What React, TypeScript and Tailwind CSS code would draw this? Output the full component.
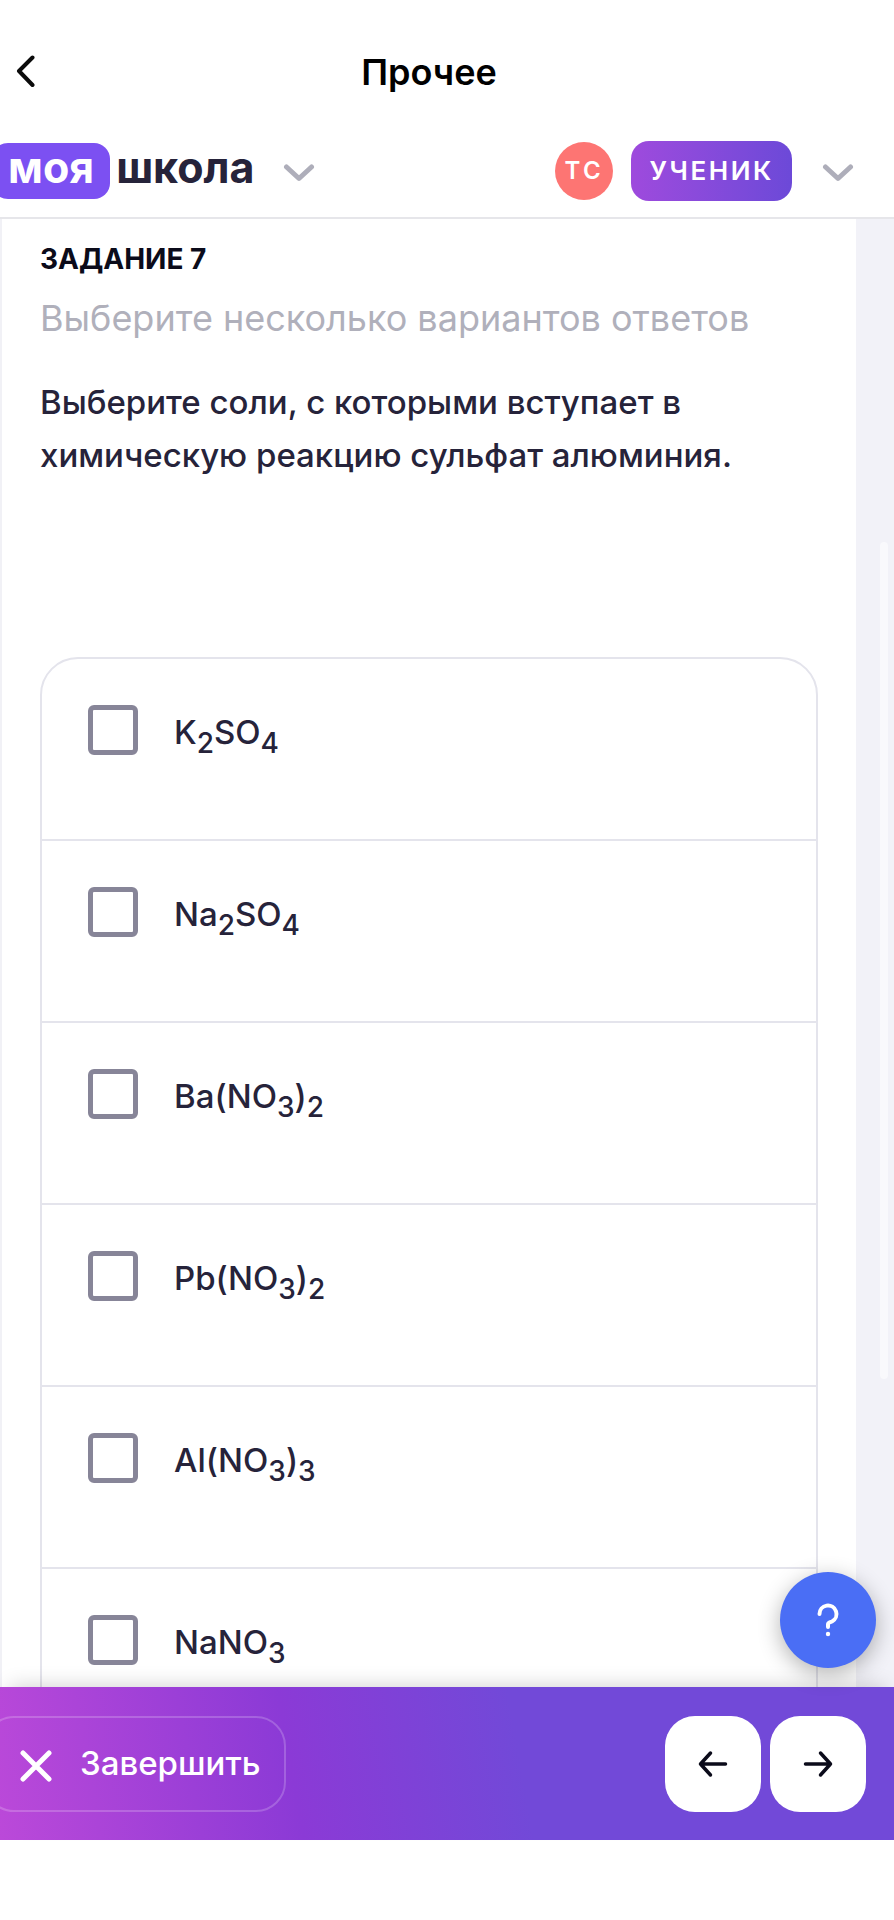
import { Fragment } from 'react';

const answers = ['K2SO4', 'Na2SO4', 'Ba(NO3)2', 'Pb(NO3)2', 'Al(NO3)3', 'NaNO3'];

// digits in a formula go to the lower index
function Formula({ text }: { text: string }) {
	return (
		<span>
			{text.split(/(\d)/).map((part, i) =>
				/\d/.test(part) ? (
					<sub key={i} className="-bottom-[9px] text-[28px]">{part}</sub>
				) : (
					<Fragment key={i}>{part}</Fragment>
				)
			)}
		</span>
	);
}

function Chevron() {
	return (
		<svg className="mt-1" width="32" height="20" viewBox="0 0 32 20" fill="none" stroke="#aeaeba" strokeWidth="5" strokeLinecap="round" strokeLinejoin="round">
			<path d="M3.5 4 16 15.5 28.5 4" />
		</svg>
	);
}

function Arrow({ back }: { back?: boolean }) {
	return (
		<svg width="32" height="32" viewBox="0 0 32 32" fill="none" stroke="#0b0b1a" strokeWidth="3.5" strokeLinecap="round" strokeLinejoin="round">
			<path d={back ? 'M28.5 16H3.5M13.5 5 3.5 16 13.5 27' : 'M3.5 16H28.5M18.5 5 28.5 16 18.5 27'} />
		</svg>
	);
}

function App() {
	return (
		<div className="flex flex-col h-screen overflow-hidden bg-white text-[#26233a] font-['Inter','Liberation_Sans',sans-serif]">
			<header className="shrink-0">
				<div className="flex items-center h-32 pt-4 pl-4 pr-18">
					<button type="button" aria-label="Назад" className="shrink-0">
						<svg width="20" height="34" viewBox="0 0 20 34" fill="none" stroke="#0b0b0b" strokeWidth="4" strokeLinecap="round" strokeLinejoin="round">
							<path d="M16.5 2.5 3 16 16.5 30" />
						</svg>
					</button>
					<h1 className="flex-1 text-center text-4xl font-semibold text-black">Прочее</h1>
				</div>

				<div className="flex items-center justify-between h-[91px] pb-1 pr-10 border-b-2 border-[#e6e6ea]">
					<button type="button" className="flex items-center text-[43px] leading-none font-bold">
						<span className="flex items-center h-14 -ml-2 pb-1.5 pl-4 pr-4 rounded-2xl bg-[#7c50f2] text-white">моя</span>
						<span className="ml-1.5 mr-7 pb-1.5">школа</span>
						<Chevron />
					</button>
					<button type="button" className="flex items-center font-semibold text-white">
						<span className="flex items-center justify-center size-[58px] mr-[18px] rounded-full bg-[#fd7573] text-2xl tracking-[0.15em]">ТС</span>
						<span className="flex items-center h-15 px-[18px] mr-[30px] rounded-[18px] bg-linear-to-r from-[#9e4add] to-[#6c49d8] text-[26px] tracking-widest">УЧЕНИК</span>
						<Chevron />
					</button>
				</div>
			</header>

			<main className="flex flex-1 min-h-0 overflow-hidden">
				<section className="flex-1 px-[38px] pt-5 border-l-2 border-[#f1f1f6]">
					<h2 className="text-[28px] leading-10 font-bold text-[#0b0b1a]">ЗАДАНИЕ 7</h2>
					<p className="mt-[15px] text-4xl leading-12 text-[#b0b0bb]">Выберите несколько вариантов ответов</p>
					<p className="mt-[34px] text-[33px] leading-[53px] font-medium">
						Выберите соли, с которыми вступает в химическую реакцию сульфат алюминия.
					</p>

					<ul className="mt-[175px] border-2 border-[#e4e4ec] rounded-t-[38px]">
						{answers.map((answer) => (
							<li key={answer} className="h-[182px] border-b-2 border-[#e4e4ec]">
								<label className="flex items-start pt-[46px] pl-[46px] text-[33px] leading-[55px] font-medium">
									<input type="checkbox" className="appearance-none shrink-0 size-[50px] mr-9 border-[5px] border-[#878598] rounded-md checked:bg-[#7c50f2]" />
									<Formula text={answer} />
								</label>
							</li>
						))}
					</ul>
				</section>
				<div className="relative shrink-0 w-[38px] bg-[#f2f2f8]">
					<div className="absolute top-[22%] right-1.5 w-2 h-[57%] rounded-full bg-[#f9f9fc]" />
				</div>
			</main>

			<footer className="relative shrink-0 flex items-center justify-between h-[153px] mb-20 pr-7 bg-linear-[80deg,#bb49d9_0%,#8b3ad6_33%,#7249d8_58%,#7249d8_100%] shadow-[0_-10px_20px_-10px_rgba(0,0,0,0.2)]">
				<button type="button" className="flex items-center h-24 -ml-4 pl-[34px] pr-6 border-2 border-white/20 rounded-[30px] text-[33px] font-medium text-white">
					<svg className="mt-1 mr-7" width="32" height="32" viewBox="0 0 32 32" fill="none" stroke="currentColor" strokeWidth="5" strokeLinecap="round">
						<path d="M3 3 29 29M29 3 3 29" />
					</svg>
					Завершить
				</button>
				<div className="flex gap-[9px]">
					<button type="button" aria-label="Предыдущее задание" className="flex items-center justify-center size-24 rounded-[30px] bg-white">
						<Arrow back />
					</button>
					<button type="button" aria-label="Следующее задание" className="flex items-center justify-center size-24 rounded-[30px] bg-white">
						<Arrow />
					</button>
				</div>

				<button type="button" aria-label="Помощь" className="absolute right-[18px] bottom-full mb-[19px] flex items-center justify-center size-24 rounded-full bg-[#4a6ef5] shadow-[0_6px_22px_rgba(0,0,0,0.3)]">
					<svg width="24" height="34" viewBox="0 0 24 34" fill="none" stroke="white" strokeWidth="4" strokeLinecap="round" strokeLinejoin="round">
						<path d="M3.5 11a8.5 8.5 0 1 1 12.5 7.5c-2.500 1.200-4 1.200-4 3v2.500" />
						<circle cx="12" cy="31" r="2.200" fill="white" stroke="none" />
					</svg>
				</button>
			</footer>
		</div>
	);
}

export default App;
